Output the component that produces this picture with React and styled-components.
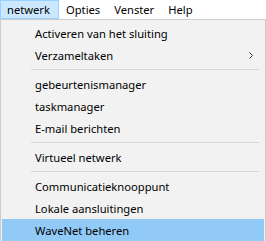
import React from "react";
import styled, { createGlobalStyle } from "styled-components";

const GlobalStyle = createGlobalStyle`
  html, body {
    margin: 0;
    padding: 0;
    background: #ffffff;
  }
  body {
    font-family: "Noto Sans", "Open Sans", sans-serif;
    font-size: 11.2px;
    color: #000000;
  }
`;

const Page = styled.div`
  width: 266px;
  height: 241px;
  overflow: hidden;
  background: #ffffff;
`;

const MenuBar = styled.div`
  display: flex;
  height: 19px;
  background: #ffffff;
`;

const MenuTitle = styled.div`
  box-sizing: border-box;
  height: 19px;
  display: flex;
  align-items: center;
  padding: ${(p) => (p.$active ? "0 8px 0 6px" : "0 7px")};
  background: ${(p) => (p.$active ? "#cce8ff" : "transparent")};
  border: ${(p) => (p.$active ? "1px solid #99d1ff" : "none")};
`;

const Dropdown = styled.div`
  box-sizing: border-box;
  width: 266px;
  border: 1px solid #cccccc;
  background: #f2f2f2;
  padding: 2px 1px;
`;

const Item = styled.div`
  position: relative;
  height: 22px;
  display: flex;
  align-items: center;
  padding-left: 33px;
  background: ${(p) => (p.$hover ? "#91c9f7" : "transparent")};
`;

const Arrow = styled.svg`
  position: absolute;
  right: 11px;
  top: 8px;
`;

const Separator = styled.div`
  height: 1px;
  margin: 3px 5px 3px 29px;
  background: #d7d7d7;
`;

const titles = ["netwerk", "Opties", "Venster", "Help"];

const entries = [
  { label: "Activeren van het sluiting" },
  { label: "Verzameltaken", sub: true },
  { sep: true },
  { label: "gebeurtenismanager" },
  { label: "taskmanager" },
  { label: "E-mail berichten" },
  { sep: true },
  { label: "Virtueel netwerk" },
  { sep: true },
  { label: "Communicatieknooppunt" },
  { label: "Lokale aansluitingen" },
  { label: "WaveNet beheren", hover: true },
];

export default function App() {
  return (
    <Page>
      <GlobalStyle />
      <MenuBar>
        {titles.map((t, i) => (
          <MenuTitle key={t} $active={i === 0}>
            {t}
          </MenuTitle>
        ))}
      </MenuBar>
      <Dropdown>
        {entries.map((e, i) =>
          e.sep ? (
            <Separator key={i} />
          ) : (
            <Item key={i} $hover={e.hover}>
              {e.label}
              {e.sub && (
                <Arrow width="4" height="7" viewBox="0 0 4 7">
                  <path d="M0.5 0.5 L3.5 3.5 L0.5 6.5" fill="none" stroke="#333" strokeWidth="1" />
                </Arrow>
              )}
            </Item>
          )
        )}
      </Dropdown>
    </Page>
  );
}
